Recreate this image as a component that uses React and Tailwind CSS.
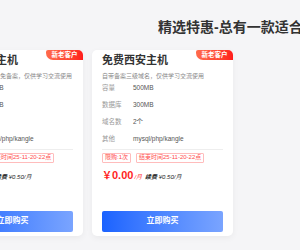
import React from "react";

const cards = [
  {
    title: "免费香港主机",
    sub: "海外节点无需实名免备案，仅供学习交流使用",
  },
  {
    title: "免费西安主机",
    sub: "自带备案三级域名，仅供学习交流使用",
  },
];

const rows = [
  ["容量", "500MB"],
  ["数据库", "300MB"],
  ["域名数", "2个"],
  ["其他", "mysql/php/kangle"],
];

function Card({ title, sub }) {
  return (
    <div className="relative flex h-[186px] w-[141px] shrink-0 flex-col rounded-[5px] bg-white px-[10px] pb-[4px] pt-[4px] shadow-[0_2px_6px_rgba(0,0,0,0.05)]">
      <div className="absolute right-0 top-0 flex h-[10px] w-[37px] items-center justify-center rounded-bl-[7px] rounded-tl-[2px] rounded-tr-[5px] bg-gradient-to-r from-[#ff6a4c] to-[#ff1a1a] text-[6.5px] font-bold leading-none text-white">
        新老客户
      </div>
      <div className="text-[11px] font-bold leading-[12px] text-[#333]">{title}</div>
      <div className="mt-[7px] whitespace-nowrap text-[6px] leading-[6px] text-[#888]">{sub}</div>
      <div className="flex flex-col">
        {rows.map(([k, v]) => (
          <div key={k} className="flex h-[17px] items-center text-[6.5px]">
            <span className="w-[31px] text-[#999]">{k}</span>
            <span className="text-[#555]">{v}</span>
          </div>
        ))}
      </div>
      <div className="mt-[2px] border-t border-[#eeeeee]" />
      <div className="mt-[3px] flex gap-[5px]">
        <span className="rounded-[1px] border border-[#ffbcbc] px-[2px] text-[6px] leading-[7.5px] text-[#ff4d4d]">限购:1次</span>
        <span className="rounded-[1px] border border-[#ffbcbc] px-[2px] text-[6px] leading-[7.5px] text-[#ff4d4d]">结束时间25-11-20-22点</span>
      </div>
      <div className="mt-[5px] flex items-baseline whitespace-nowrap leading-[14px]">
        <span className="text-[10px] font-bold text-[#ff1f1f]">￥</span>
        <span className="text-[11px] font-bold text-[#ff1f1f]">0.00</span>
        <span className="ml-[1px] text-[6px] italic text-[#ff1f1f]">/月</span>
        <span className="ml-[3px] text-[6px] italic text-[#222]">
          <b>续费</b> ¥0.50/月
        </span>
      </div>
      <div className="mt-auto flex h-[21.5px] items-center justify-center rounded-[2px] bg-gradient-to-r from-[#1a62ff] to-[#7aa4ff] text-[8px] font-bold text-white">
        立即购买
      </div>
    </div>
  );
}

export default function App() {
  return (
    <div className="h-[250px] w-[300px] overflow-hidden bg-[#f5f5f7] font-['Liberation_Sans','Noto_Sans_CJK_SC',sans-serif]">
      <div className="h-[50px] whitespace-nowrap pl-[158px] pt-[19px] text-[14px] font-bold leading-[16px] text-[#333]">
        精选特惠-总有一款适合您的主机
      </div>
      <div className="ml-[-58px] flex gap-[9px]">
        {cards.map((c) => (
          <Card key={c.title} {...c} />
        ))}
      </div>
    </div>
  );
}
